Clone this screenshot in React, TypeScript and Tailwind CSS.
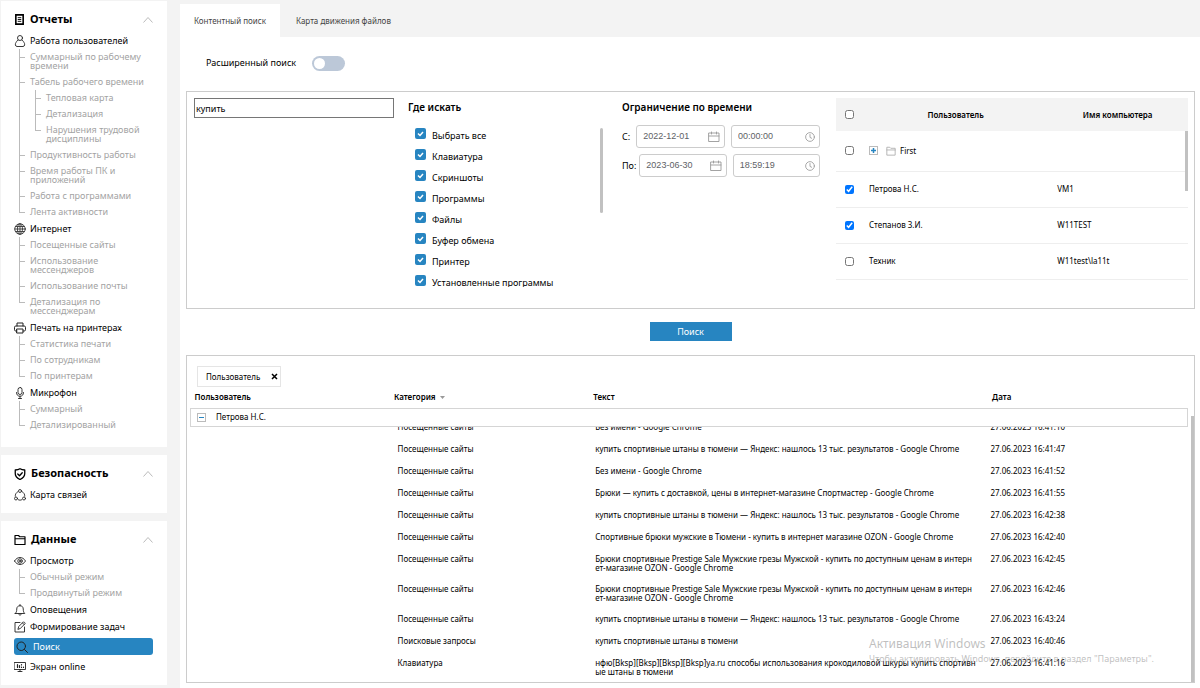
import React from 'react';

type TreeItem = { label: string; children?: TreeItem[] };
type NavGroup = { label: string; icon: React.ReactNode; items?: TreeItem[]; active?: boolean };

const iconProps = {
  viewBox: '0 0 24 24',
  fill: 'none',
  stroke: 'currentColor',
  strokeLinecap: 'round' as const,
  strokeLinejoin: 'round' as const,
  'aria-hidden': true,
};

const ReportIcon = () => (
  <svg {...iconProps} strokeWidth={3.5} strokeLinejoin="miter" className="size-[11px]">
    <path d="M4 2h16v20H4z" />
    <path d="M9 8h6M9 12h6M9 16h6" strokeWidth={2} />
  </svg>
);

const UserIcon = () => (
  <svg {...iconProps} strokeWidth={1.8} className="size-3">
    <circle cx="12" cy="6" r="5" />
    <path d="M8 10.500C4 12 6 13 4 15c-2 2-2 8 2 8h12c4 0 4-6 2-8-2-2 0-3-4-4.500" />
  </svg>
);

const GlobeIcon = () => (
  <svg {...iconProps} strokeWidth={2} className="size-3 text-[#444]">
    <circle cx="12" cy="12" r="10.500" />
    <ellipse cx="12" cy="12" rx="5" ry="10.500" />
    <path d="M12 1.500v21M1.500 12h21M3 7h18M3 17h18" />
  </svg>
);

const PrinterIcon = () => (
  <svg {...iconProps} strokeWidth={2} className="size-3">
    <path d="M6 8V2h12v6" />
    <path d="M6 18H3.500C2 18 1 17 1 15.500v-5C1 9 2 8 3.500 8h17C22 8 23 9 23 10.500v5c0 1.500-1 2.500-2.500 2.500H18" />
    <path d="M6 14h12v8H6z" />
  </svg>
);

const MicIcon = () => (
  <svg {...iconProps} strokeWidth={1.8} className="size-3">
    <rect x="8" y="1" width="8" height="14" rx="4" />
    <path d="M5 11c0 5 3 7.500 7 7.500s7-2.500 7-7.500M12 18.500V23M9 23h6" />
  </svg>
);

const ShieldIcon = () => (
  <svg {...iconProps} strokeWidth={2.6} className="size-3">
    <path d="M12 1.500c3 2 6 2.500 9.500 2.500v7c0 6-4 9.500-9.500 12-5.500-2.500-9.500-6-9.500-12V4C6 4 9 3.500 12 1.500z" />
    <path d="m7.500 12 3.500 3.500 5.500-6" />
  </svg>
);

const LinksIcon = () => (
  <svg {...iconProps} strokeWidth={1.7} className="size-3">
    <circle cx="12" cy="4" r="3" />
    <circle cx="4" cy="19" r="3" />
    <circle cx="20" cy="19" r="3" />
    <path d="M7.500 5.500C4 7.500 2 11 2.500 14.500M16.500 5.500c3.500 2 5.500 5.500 5 9M8.500 21.500c2.500 1.200 4.500 1.200 7 0" />
  </svg>
);

const FolderIcon = ({ className, strokeWidth }: { className: string; strokeWidth: number }) => (
  <svg {...iconProps} strokeWidth={strokeWidth} className={className}>
    <path d="M2 21V3h7l2.500 2.500H22V21zM2 9.500h20" />
  </svg>
);

const EyeIcon = () => (
  <svg {...iconProps} strokeWidth={1.8} className="size-3">
    <path d="M1 12c3-5 7-7 11-7s8 2 11 7c-3 5-7 7-11 7s-8-2-11-7z" />
    <circle cx="12" cy="12" r="4.500" />
    <circle cx="12" cy="12" r="1.500" />
  </svg>
);

const BellIcon = () => (
  <svg {...iconProps} strokeWidth={1.8} className="size-3">
    <path d="M12 1v2.500M2.500 19h19c-2-2-3-4-3-9 0-4-2.500-6.500-6.500-6.500S5.500 6 5.500 10c0 5-1 7-3 9zM9.500 19.500c0 4 5 4 5 0" />
  </svg>
);

const EditIcon = () => (
  <svg {...iconProps} strokeWidth={1.8} className="size-3">
    <path d="M12 3H2v19h19V12" />
    <path d="m8 16 1.500-5L19 1.500l3.500 3.500L13 14.500zM17 4l3 3" />
  </svg>
);

const SearchIcon = () => (
  <svg {...iconProps} strokeWidth={2} className="size-3">
    <circle cx="10.500" cy="10.500" r="8.500" />
    <path d="m17 17 6 6" />
  </svg>
);

const ScreenIcon = () => (
  <svg {...iconProps} strokeWidth={1.8} className="size-3">
    <path d="M1 3h22v14H1zM8 21h8M12 17v4" />
    <path d="M7 7v6M11 9v4M15 7v1M15 12v1M19 12v1" strokeWidth={2.4} />
  </svg>
);

const CalendarIcon = () => (
  <svg {...iconProps} strokeWidth={1.8} className="size-3 text-[#999]">
    <path d="M2 4h20v17H2zM2 10h20M7 2v4M17 2v4" />
  </svg>
);

const ClockIcon = () => (
  <svg {...iconProps} strokeWidth={2} className="size-[10px] text-[#999]">
    <circle cx="12" cy="12" r="10.500" />
    <path d="M12 6v7l4 2" />
  </svg>
);

const reportGroups: NavGroup[] = [
  {
    label: 'Работа пользователей',
    icon: <UserIcon />,
    items: [
      { label: 'Суммарный по рабочему времени' },
      {
        label: 'Табель рабочего времени',
        children: [
          { label: 'Тепловая карта' },
          { label: 'Детализация' },
          { label: 'Нарушения трудовой дисциплины' },
        ],
      },
      { label: 'Продуктивность работы' },
      { label: 'Время работы ПК и приложений' },
      { label: 'Работа с программами' },
      { label: 'Лента активности' },
    ],
  },
  {
    label: 'Интернет',
    icon: <GlobeIcon />,
    items: [
      { label: 'Посещенные сайты' },
      { label: 'Использование мессенджеров' },
      { label: 'Использование почты' },
      { label: 'Детализация по мессенджерам' },
    ],
  },
  {
    label: 'Печать на принтерах',
    icon: <PrinterIcon />,
    items: [{ label: 'Статистика печати' }, { label: 'По сотрудникам' }, { label: 'По принтерам' }],
  },
  {
    label: 'Микрофон',
    icon: <MicIcon />,
    items: [{ label: 'Суммарный' }, { label: 'Детализированный' }],
  },
];

const dataGroups: NavGroup[] = [
  {
    label: 'Просмотр',
    icon: <EyeIcon />,
    items: [{ label: 'Обычный режим' }, { label: 'Продвинутый режим' }],
  },
  { label: 'Оповещения', icon: <BellIcon /> },
  { label: 'Формирование задач', icon: <EditIcon /> },
  { label: 'Поиск', icon: <SearchIcon />, active: true },
  { label: 'Экран online', icon: <ScreenIcon /> },
];

const sources = [
  'Выбрать все',
  'Клавиатура',
  'Скриншоты',
  'Программы',
  'Файлы',
  'Буфер обмена',
  'Принтер',
  'Установленные программы',
];

const users = [
  { name: 'First', computer: '', checked: false, folder: true },
  { name: 'Петрова Н.С.', computer: 'VM1', checked: true },
  { name: 'Степанов З.И.', computer: 'W11TEST', checked: true },
  { name: 'Техник', computer: 'W11test\\la11t', checked: false },
];

const SITES = 'Посещенные сайты';
const YANDEX = 'купить спортивные штаны в тюмени — Яндекс: нашлось 13 тыс. результатов - Google Chrome';
const OZON =
  'Брюки спортивные Prestige Sale Мужские грезы Мужской - купить по доступным ценам в интерн\nет-магазине OZON - Google Chrome';

const results = [
  [SITES, 'Без имени - Google Chrome', '16:41:10'],
  [SITES, YANDEX, '16:41:47'],
  [SITES, 'Без имени - Google Chrome', '16:41:52'],
  [SITES, 'Брюки — купить с доставкой, цены в интернет-магазине Спортмастер - Google Chrome', '16:41:55'],
  [SITES, YANDEX, '16:42:38'],
  [SITES, 'Спортивные брюки мужские в Тюмени - купить в интернет магазине OZON - Google Chrome', '16:42:40'],
  [SITES, OZON, '16:42:45'],
  [SITES, OZON, '16:42:46'],
  [SITES, YANDEX, '16:43:24'],
  ['Поисковые запросы', 'купить спортивные штаны в тюмени', '16:40:46'],
  [
    'Клавиатура',
    'нфю[Bksp][Bksp][Bksp][Bksp]ya.ru способы использования крокодиловой шкуры купить спортивн\nые штаны в тюмени',
    '16:41:16',
  ],
];

const Tree = ({ items, className }: { items: TreeItem[]; className: string }) => (
  <ul className={className}>
    {items.map((item, i) => (
      <li key={item.label} className="flex gap-[5px]">
        {/* Branch line */}
        <div className="flex w-[6px] shrink-0 flex-col">
          <div className="h-[9px] border-b border-l border-[#bbb]"></div>
          {i < items.length - 1 && <div className="flex-1 border-l border-[#bbb]"></div>}
        </div>
        <div className="min-w-0 flex-1">
          <a href="#" className="block pt-[3px] pb-1 text-[9px] leading-[9px] text-[#a3a3a3]">
            {item.label}
          </a>
          {item.children && <Tree items={item.children} className="ml-[5px]" />}
        </div>
      </li>
    ))}
  </ul>
);

const NavLink = ({ group }: { group: NavGroup }) => (
  <a
    href="#"
    className={
      group.active
        ? 'my-[3px] flex h-[17px] items-center gap-[5px] rounded-[3px] bg-[#2785c1] pl-0.5 text-[9px] text-white'
        : 'flex h-[17px] items-center gap-1 text-[9px] text-black'
    }
  >
    <span className="text-[#222]">{group.icon}</span>
    {group.label}
  </a>
);

const NavPanel = ({
  title,
  icon,
  groups,
  className,
}: {
  title: string;
  icon: React.ReactNode;
  groups: NavGroup[];
  className: string;
}) => (
  <section className={`bg-white pt-2 pr-3.5 pl-[13px] ${className}`}>
    <h2 className="mb-0.5">
      <button type="button" className="flex h-[21px] w-full items-center gap-[5px] text-[11px] font-bold">
        {icon}
        {title}
        <svg viewBox="0 0 10 6" fill="none" stroke="#bbb" className="ml-auto h-[6px] w-[10px]" aria-hidden="true">
          <path d="m.5 5.500 4.500-5 4.500 5" />
        </svg>
      </button>
    </h2>
    {groups.map((group) => (
      <div key={group.label}>
        <NavLink group={group} />
        {group.items && <Tree items={group.items} className="ml-[5px]" />}
      </div>
    ))}
  </section>
);

const Field = ({ label, value, icon }: { label: string; value: string; icon: React.ReactNode }) => (
  <div className="flex h-[23px] min-w-0 flex-1 items-center rounded-[3px] border border-[#ccc] pr-1 pl-1.5">
    <input
      type="text"
      aria-label={label}
      defaultValue={value}
      className="w-0 min-w-0 flex-1 font-['Liberation_Sans',sans-serif] text-[9px] text-[#606266] outline-none"
    />
    {icon}
  </div>
);

const SearchForm = () => (
  <form className="grid grid-cols-[200px_200px_200px_1fr] gap-x-3.5 border border-[#ccc] pt-1.5 pr-1.5 pb-[21px] pl-[7px]">
    <input
      type="text"
      aria-label="Текст запроса"
      defaultValue="купить"
      className="h-5 border border-[#767676] px-px text-[9px]"
    />

    <fieldset>
      <legend className="h-[18px] text-[10px] leading-[18px] font-semibold">Где искать</legend>
      <div className="mt-3 flex h-[159px] items-start overflow-hidden pl-[7px]">
        <ul className="flex-1">
          {sources.map((source) => (
            <li key={source}>
              <label className="flex h-[21px] items-start gap-1.5 text-[9px] leading-[16px]">
                <span className="grid">
                  <input
                    type="checkbox"
                    defaultChecked
                    className="col-start-1 row-start-1 size-[11px] appearance-none rounded-[2px] bg-[#2785c1]"
                  />
                  <svg
                    viewBox="0 0 11 11"
                    fill="none"
                    stroke="white"
                    strokeWidth="1.500"
                    className="pointer-events-none col-start-1 row-start-1 size-[11px]"
                    aria-hidden="true"
                  >
                    <path d="m3 5.500 2 2 3-3.500" />
                  </svg>
                </span>
                {source}
              </label>
            </li>
          ))}
        </ul>
        <div className="mr-[5px] h-[85px] w-[3px] rounded-full bg-[#c1c1c1]"></div>
      </div>
    </fieldset>

    <fieldset>
      <legend className="h-[18px] text-[10px] leading-[18px] font-semibold">Ограничение по времени</legend>
      <div className="mt-[9px] flex flex-col gap-1.5 pr-0.5 text-[9px]">
        <div className="flex items-center gap-1.5">
          <span>С:</span>
          <Field label="Дата начала" value="2022-12-01" icon={<CalendarIcon />} />
          <Field label="Время начала" value="00:00:00" icon={<ClockIcon />} />
        </div>
        <div className="flex items-center gap-[3px]">
          <span>По:</span>
          <div className="flex flex-1 gap-1.5">
            <Field label="Дата окончания" value="2023-06-30" icon={<CalendarIcon />} />
            <Field label="Время окончания" value="18:59:19" icon={<ClockIcon />} />
          </div>
        </div>
      </div>
    </fieldset>

    <div className="flex items-start">
      <table className="w-full table-fixed text-[8px]">
        <colgroup>
          <col className="w-7" />
          <col />
          <col className="w-[40%]" />
        </colgroup>
        <thead className="bg-[#f3f3f3]">
          <tr className="h-[33px]">
            <th className="pl-[9px]">
              <input type="checkbox" aria-label="Выбрать всех" className="block size-[9px]" />
            </th>
            <th className="font-semibold">Пользователь</th>
            <th className="font-semibold">Имя компьютера</th>
          </tr>
        </thead>
        <tbody>
          {users.map((user) => (
            <tr key={user.name} className="h-9 border-b border-[#eee] first:h-10">
              <td className="pl-[9px]">
                <input
                  type="checkbox"
                  aria-label={user.name}
                  defaultChecked={user.checked}
                  className="block size-[9px]"
                />
              </td>
              <td className="pl-[5px]">
                {user.folder ? (
                  <span className="flex items-center gap-2">
                    <button
                      type="button"
                      aria-label="Развернуть"
                      className="flex size-[9px] items-center justify-center border border-[#bbb] text-[#2785c1]"
                    >
                      <svg
                        viewBox="0 0 5 5"
                        stroke="currentColor"
                        strokeWidth="1.500"
                        className="size-[5px]"
                        aria-hidden="true"
                      >
                        <path d="M0 2.500h5M2.500 0v5" />
                      </svg>
                    </button>
                    <span className="flex items-center gap-1">
                      <FolderIcon className="size-[10px] text-[#aaa]" strokeWidth={2} />
                      {user.name}
                    </span>
                  </span>
                ) : (
                  user.name
                )}
              </td>
              <td className="pl-2.5">{user.computer}</td>
            </tr>
          ))}
        </tbody>
      </table>
      <div className="-ml-[3px] mt-[33px] h-[60px] w-[3px] shrink-0 bg-[#c1c1c1]"></div>
    </div>
  </form>
);

const ResultColumns = () => (
  <colgroup>
    <col className="w-1/5" />
    <col className="w-1/5" />
    <col />
    <col className="w-1/5" />
  </colgroup>
);

const Results = () => (
  <section className="border border-[#ccc] pt-2.5 text-[8px]">
    <div className="ml-2.5 flex h-[21px] w-[84px] items-center justify-between border border-[#e5e5e5] pr-0.5 pl-2">
      Пользователь
      <button type="button" aria-label="Убрать группировку">
        <svg viewBox="0 0 7 7" stroke="black" strokeWidth="1.500" className="size-[7px]" aria-hidden="true">
          <path d="m1 1 5 5M6 1 1 6" />
        </svg>
      </button>
    </div>
    <div className="flex gap-[3px] pl-[3px]">
      <div className="min-w-0 flex-1">
        <table className="w-full table-fixed text-left">
          <ResultColumns />
          <thead>
            <tr className="h-[21px]">
              <th className="pl-1 font-semibold">Пользователь</th>
              <th className="pl-1 font-semibold">
                <span className="flex items-center gap-1">
                  Категория
                  <svg viewBox="0 0 5 3" fill="#999" className="h-[3px] w-[5px]" aria-hidden="true">
                    <path d="M0 0h5L2.500 3z" />
                  </svg>
                </span>
              </th>
              <th className="pl-1 font-semibold">Текст</th>
              <th className="pl-1 font-semibold">Дата</th>
            </tr>
          </thead>
          <tbody>
            <tr className="h-[18px] border border-[#d5d5d5]">
              <td colSpan={4} className="pl-1.5">
                <span className="flex items-center gap-2.5">
                  <button
                    type="button"
                    aria-label="Свернуть"
                    className="flex size-[9px] items-center justify-center border border-[#bbb]"
                  >
                    <span className="h-px w-[5px] bg-[#2785c1]"></span>
                  </button>
                  Петрова Н.С.
                </span>
              </td>
            </tr>
          </tbody>
        </table>
        <div className="overflow-hidden">
          <table className="-mt-[11px] w-full table-fixed text-left leading-[9px]">
            <ResultColumns />
            <tbody>
              {results.map(([category, text, time]) => (
                <tr key={time} className="align-top">
                  <td></td>
                  <td className="pt-1.5 pb-[7px] pl-2">{category}</td>
                  <td className="pt-1.5 pr-1 pb-1.5 pl-1.5 break-all whitespace-pre-line">{text}</td>
                  <td className="pt-1.5 pb-[7px] pl-0.5">27.06.2023 {time}</td>
                </tr>
              ))}
            </tbody>
          </table>
        </div>
      </div>
      <div className="mt-[29px] w-[3px] bg-[#c1c1c1]"></div>
    </div>
  </section>
);

export default function App() {
  return (
    <div className="relative flex min-h-screen gap-[13px] bg-[#f3f3f3] pl-px font-['Noto_Sans','Open_Sans',sans-serif] text-black">
      <nav className="flex w-[166px] shrink-0 flex-col gap-2 pt-px">
        <NavPanel title="Отчеты" icon={<ReportIcon />} groups={reportGroups} className="pb-3.5" />
        <NavPanel
          title="Безопасность"
          icon={<ShieldIcon />}
          groups={[{ label: 'Карта связей', icon: <LinksIcon /> }]}
          className="pb-2.5"
        />
        <NavPanel
          title="Данные"
          icon={<FolderIcon className="size-3" strokeWidth={2.4} />}
          groups={dataGroups}
          className="pb-2.5"
        />
      </nav>

      <main className="flex min-w-0 flex-1 flex-col pt-1">
        <div className="flex h-[33px] text-[8px] text-[#444]">
          <button type="button" className="bg-white px-3.5">
            Контентный поиск
          </button>
          <button type="button" className="px-4">
            Карта движения файлов
          </button>
        </div>

        <div className="flex-1 bg-white pt-4 pr-[5px] pb-1.5 pl-1.5">
          <label className="ml-5 flex h-5 items-center gap-4 text-[9px]">
            Расширенный поиск
            <span className="grid h-[15px] w-[33px] items-center">
              <input
                type="checkbox"
                role="switch"
                className="col-start-1 row-start-1 h-[15px] w-[33px] appearance-none rounded-full bg-[#bcc8d8]"
              />
              <span className="pointer-events-none col-start-1 row-start-1 ml-0.5 size-[11px] rounded-full bg-white"></span>
            </span>
          </label>

          <div className="mt-[18px]">
            <SearchForm />
          </div>
          <div className="flex justify-center pt-[13px] pb-[14px]">
            <button type="button" className="h-[19px] w-[82px] bg-[#2785c1] text-[9px] text-white">
              Поиск
            </button>
          </div>
          <Results />
        </div>
      </main>

      {/* Activation notice */}
      <div className="pointer-events-none absolute right-[46px] bottom-[23px] text-[#8888] select-none">
        <p className="text-[12px] leading-4">Активация Windows</p>
        <p className="text-[9px] leading-[14px]">Чтобы активировать Windows, перейдите в раздел "Параметры".</p>
      </div>
    </div>
  );
}
